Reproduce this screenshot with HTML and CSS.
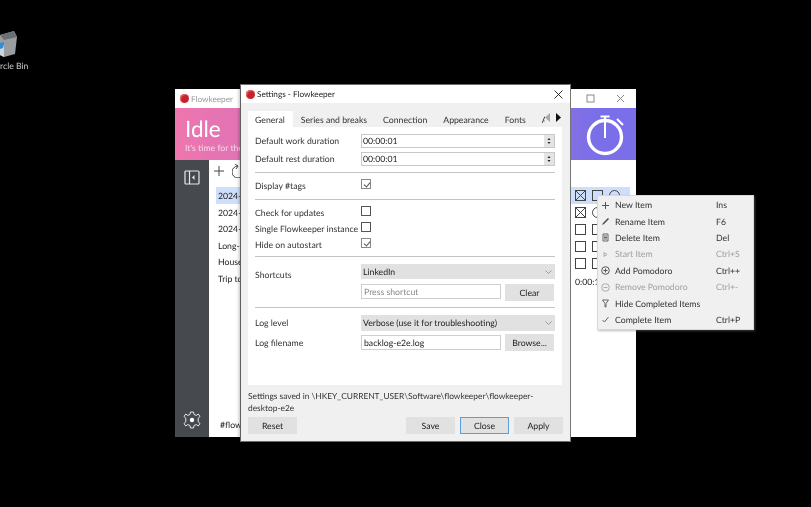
FILE: index.html
```html
<!DOCTYPE html>
<html lang="en">
<head>
  <meta charset="UTF-8">
  <title>Settings - Flowkeeper</title>
  <link rel="stylesheet" href="styles.css">
</head>
<body>
  <div class="desktop-icon">
    <svg class="bin" width="18" height="28" viewBox="0 0 18 28">
      <path d="M0 5 L14 1 L17 7 L15 24 L4 27 L0 25 Z" fill="#9a9da0"/>
      <path d="M0 5 L14 1 L17 7 L4 10 Z" fill="#6c7074"/>
      <path d="M0 17 L4 16 L4 27 L0 25 Z" fill="#d0d2d4"/>
      <path d="M0 13 L4 12 L3 18 L0 19 Z" fill="#2d8fd8"/>
    </svg>
    <span class="bin-label">rcle Bin</span>
  </div>

  <!-- main window, behind the dialog -->
  <div class="window main-window">
    <div class="main-title">
      <span class="tomato"></span>
      <span class="main-title-text">Flowkeeper</span>
      <span class="main-controls">
        <svg width="9" height="9" viewBox="0 0 9 9"><rect x="1" y="1" width="7" height="7" fill="none" stroke="#8a8a8a"/></svg>
        <svg width="9" height="9" viewBox="0 0 9 9"><path d="M1 1 L8 8 M8 1 L1 8" stroke="#8a8a8a"/></svg>
      </span>
    </div>
    <div class="hero">
      <div>
        <div class="hero-title">Idle</div>
        <div class="hero-sub">It's time for the</div>
      </div>
      <svg class="timer" width="40" height="44" viewBox="0 0 40 44">
        <circle cx="20" cy="25" r="16.5" fill="none" stroke="#fff" stroke-width="3.4"/>
        <path d="M20 5 V26 M15.5 4.5 H24.5 M32 7 L38 13" fill="none" stroke="#fff" stroke-width="2"/>
      </svg>
    </div>
    <div class="main-body">
      <div class="sidebar">
        <svg width="16" height="15" viewBox="0 0 16 15">
          <rect x="1" y="1" width="14" height="13" rx="1" fill="none" stroke="#e8e8e8" stroke-width="1.2"/>
          <path d="M5.5 1 V14" stroke="#e8e8e8" stroke-width="1.2"/>
          <path d="M10.5 5 L8 7.5 L10.5 10 Z" fill="#e8e8e8"/>
        </svg>
        <svg width="18" height="18" viewBox="0 0 18 18">
          <path d="M7.5 1 H10.5 L11 3.4 L13.2 4.4 L15.3 3.1 L17 5.5 L15.2 7.2 V10.8 L17 12.5 L15.3 14.9 L13.2 13.6 L11 14.6 L10.5 17 H7.5 L7 14.6 L4.8 13.6 L2.7 14.9 L1 12.5 L2.8 10.8 V7.2 L1 5.5 L2.7 3.1 L4.8 4.4 L7 3.4 Z" fill="none" stroke="#e8e8e8"/>
          <circle cx="9" cy="9" r="2.2" fill="#fff"/>
        </svg>
      </div>
      <div class="backlogs">
        <div class="back-tools">
          <svg width="12" height="12" viewBox="0 0 12 12"><path d="M6 1 V11 M1 6 H11" stroke="#444"/></svg>
          <svg width="12" height="14" viewBox="0 0 12 14"><path d="M6 2 A6 6 0 1 0 12 8 M3 0 L6 2 L4 5" fill="none" stroke="#444"/></svg>
        </div>
        <div class="back-row selected">2024-</div>
        <div class="back-row">2024-</div>
        <div class="back-row">2024-</div>
        <div class="back-row">Long-</div>
        <div class="back-row">House</div>
        <div class="back-row">Trip to</div>
        <div class="back-tag">#flow</div>
      </div>
      <div class="items">
        <div class="item-row selected"><span class="box cross"></span><span class="box dots"></span><span class="round"></span></div>
        <div class="item-row"><span class="box cross"></span><span class="round"></span></div>
        <div class="item-row"><span class="box"></span><span class="box"></span></div>
        <div class="item-row"><span class="box"></span><span class="box"></span></div>
        <div class="item-row"><span class="box"></span><span class="box"></span></div>
        <div class="item-total">0:00:1</div>
      </div>
    </div>
  </div>

  <!-- settings dialog -->
  <div class="window dialog">
    <div class="dialog-title">
      <span class="tomato"></span>
      <span class="dialog-title-text">Settings - Flowkeeper</span>
      <svg width="9" height="9" viewBox="0 0 9 9"><path d="M0.5 0.5 L8.5 8.5 M8.5 0.5 L0.5 8.5" stroke="#333"/></svg>
    </div>
    <div class="tabs">
      <span class="tab active">General</span>
      <span class="tab">Series and breaks</span>
      <span class="tab">Connection</span>
      <span class="tab">Appearance</span>
      <span class="tab">Fonts</span>
      <span class="tab tab-cut">A</span>
      <span class="tab-arrows">
        <svg width="6" height="9" viewBox="0 0 6 9"><path d="M5 0 V9 L0 4.5 Z" fill="#a8a8a8"/></svg>
        <svg width="6" height="9" viewBox="0 0 6 9"><path d="M1 0 V9 L6 4.5 Z" fill="#111"/></svg>
      </span>
    </div>
    <div class="pane">
      <div class="form-row row-spin1">
        <span class="label">Default work duration</span>
        <div class="spin"><span class="spin-value">00:00:01</span>
          <svg class="spin-btns" width="10" height="12" viewBox="0 0 10 12"><path d="M3.5 5 L5 3 L6.5 5 Z M3.5 7 L5 9 L6.5 7 Z" fill="#222"/></svg>
        </div>
      </div>
      <div class="form-row row-spin2">
        <span class="label">Default rest duration</span>
        <div class="spin"><span class="spin-value">00:00:01</span>
          <svg class="spin-btns" width="10" height="12" viewBox="0 0 10 12"><path d="M3.5 5 L5 3 L6.5 5 Z M3.5 7 L5 9 L6.5 7 Z" fill="#222"/></svg>
        </div>
      </div>
      <hr class="sep sep-a">
      <div class="form-row row-tags">
        <span class="label">Display #tags</span>
        <span class="check checked"></span>
      </div>
      <hr class="sep sep-b">
      <div class="form-row row-check">
        <span class="label">Check for updates</span>
        <span class="check"></span>
      </div>
      <div class="form-row row-check">
        <span class="label">Single Flowkeeper instance</span>
        <span class="check"></span>
      </div>
      <div class="form-row row-check">
        <span class="label">Hide on autostart</span>
        <span class="check checked"></span>
      </div>
      <hr class="sep sep-c">
      <div class="shortcut-block">
        <span class="label shortcut-label">Shortcuts</span>
        <div class="shortcut-fields">
          <div class="combo">LinkedIn<svg width="7" height="4" viewBox="0 0 7 4"><path d="M0.5 0.5 L3.5 3.5 L6.5 0.5" fill="none" stroke="#999"/></svg></div>
          <div class="field-line">
            <span class="text-input placeholder">Press shortcut</span>
            <span class="btn">Clear</span>
          </div>
        </div>
      </div>
      <hr class="sep sep-d">
      <div class="form-row row-log">
        <span class="label">Log level</span>
        <div class="combo">Verbose (use it for troubleshooting)<svg width="7" height="4" viewBox="0 0 7 4"><path d="M0.5 0.5 L3.5 3.5 L6.5 0.5" fill="none" stroke="#999"/></svg></div>
      </div>
      <div class="form-row row-file">
        <span class="label">Log filename</span>
        <div class="field-line">
          <span class="text-input">backlog-e2e.log</span>
          <span class="btn">Browse...</span>
        </div>
      </div>
    </div>
    <div class="status">Settings saved in \HKEY_CURRENT_USER\Software\flowkeeper\flowkeeper-<br>desktop-e2e</div>
    <div class="dialog-buttons">
      <span class="btn">Reset</span>
      <span class="spacer"></span>
      <span class="btn">Save</span>
      <span class="btn focus">Close</span>
      <span class="btn">Apply</span>
    </div>
  </div>

  <!-- context menu -->
  <div class="menu">
    <div class="menu-item">
      <svg width="9" height="9" viewBox="0 0 9 9"><path d="M4.5 1 V8 M1 4.5 H8" stroke="#555"/></svg>
      <span class="menu-name">New Item</span><span class="menu-key">Ins</span>
    </div>
    <div class="menu-item">
      <svg width="9" height="9" viewBox="0 0 9 9"><path d="M1 8 L2 6 L7 1 L8 2 L3 7 Z" fill="#444"/></svg>
      <span class="menu-name">Rename Item</span><span class="menu-key">F6</span>
    </div>
    <div class="menu-item">
      <svg width="9" height="9" viewBox="0 0 9 9"><path d="M2 1 H7 V8 H2 Z" fill="none" stroke="#666"/><path d="M3 3 H6 M3 4.5 H6 M3 6 H6" stroke="#666"/></svg>
      <span class="menu-name">Delete Item</span><span class="menu-key">Del</span>
    </div>
    <div class="menu-item disabled">
      <svg width="9" height="9" viewBox="0 0 9 9"><path d="M3 2.5 L6 4.5 L3 6.5 Z" fill="none" stroke="#aaa"/></svg>
      <span class="menu-name">Start Item</span><span class="menu-key">Ctrl+S</span>
    </div>
    <div class="menu-item">
      <svg width="9" height="9" viewBox="0 0 9 9"><circle cx="4.5" cy="4.5" r="3.8" fill="none" stroke="#555"/><path d="M4.5 2.5 V6.5 M2.5 4.5 H6.5" stroke="#555"/></svg>
      <span class="menu-name">Add Pomodoro</span><span class="menu-key">Ctrl++</span>
    </div>
    <div class="menu-item disabled">
      <svg width="9" height="9" viewBox="0 0 9 9"><circle cx="4.5" cy="4.5" r="3.8" fill="none" stroke="#aaa"/><path d="M2.5 4.5 H6.5" stroke="#aaa"/></svg>
      <span class="menu-name">Remove Pomodoro</span><span class="menu-key">Ctrl+-</span>
    </div>
    <div class="menu-item">
      <svg width="9" height="9" viewBox="0 0 9 9"><path d="M1.5 1 H7.5 L5 4.5 V8 H4 V4.5 Z" fill="none" stroke="#666"/></svg>
      <span class="menu-name">Hide Completed Items</span><span class="menu-key"></span>
    </div>
    <div class="menu-item">
      <svg width="9" height="9" viewBox="0 0 9 9"><path d="M1.5 5 L3.5 7 L7.5 2" fill="none" stroke="#666"/></svg>
      <span class="menu-name">Complete Item</span><span class="menu-key">Ctrl+P</span>
    </div>
  </div>
</body>
</html>
```

FILE: styles.css
```css
html, body {
  margin: 0;
  padding: 0;
  width: 811px;
  height: 507px;
  overflow: hidden;
  background-color: #000;
}
body {
  position: relative;
  font-family: Lato, "Open Sans", sans-serif;
  font-size: 8.7px;
  line-height: 12px;
  text-rendering: geometricPrecision;
  color: #222;
  filter: blur(0.35px);
}

/* desktop */
.desktop-icon {
  position: absolute;
  left: 0;
  top: 30px;
  width: 30px;
}
.bin {
  display: block;
}
.bin-label {
  display: block;
  margin-top: 2px;
  color: #c8c8c8;
  white-space: nowrap;
}

.window {
  position: absolute;
  box-sizing: border-box;
}

/* main window */
.main-window {
  left: 175px;
  top: 89px;
  width: 461px;
  height: 348px;
  display: flex;
  flex-direction: column;
  background-color: #fff;
}
.main-title {
  height: 19px;
  display: flex;
  align-items: center;
  padding-left: 5px;
  gap: 2px;
  color: #999;
  flex: none;
}
.main-title-text, .dialog-title-text {
  font-size: 8.2px;
}
.main-controls {
  margin-left: auto;
  display: flex;
  gap: 21px;
  padding-right: 11px;
}
.tomato {
  width: 9px;
  height: 9px;
  border-radius: 50%;
  flex: none;
  background-color: #c4232b;
  box-shadow: inset 1px 1px 1px #e8686a;
}
.hero {
  height: 52px;
  flex: none;
  display: flex;
  justify-content: space-between;
  align-items: flex-start;
  box-sizing: border-box;
  padding: 7px 11px 0 10px;
  background: linear-gradient(90deg, #ee76ae, #dc72b8 20%, #7a6fe8 92%);
  color: #fff;
}
.hero-title {
  font-size: 22.5px;
  line-height: 27px;
}
.hero-sub {
  color: #f8d8e8;
}
.timer {
  margin-top: -3px;
}
.main-body {
  flex: 1;
  display: flex;
  min-height: 0;
}
.sidebar {
  width: 34px;
  flex: none;
  background-color: #46494d;
  display: flex;
  flex-direction: column;
  align-items: center;
  justify-content: space-between;
  padding: 10px 0 8px;
  box-sizing: border-box;
}
.backlogs {
  width: 110px;
  flex: none;
  padding: 4px 0 0 7px;
  box-sizing: border-box;
  display: flex;
  flex-direction: column;
}
.back-tools {
  display: flex;
  align-items: center;
  gap: 7px;
  height: 14px;
  margin: 0 0 9px -3px;
}
.back-row {
  height: 16.5px;
  line-height: 17px;
  padding-left: 2px;
}
.back-row.selected {
  background-color: #cfdffb;
}
.back-tag {
  margin-top: auto;
  padding: 0 0 6px 4px;
}
.items {
  margin-left: auto;
  width: 65px;
  padding: 27px 6px 0 0;
  box-sizing: border-box;
}
.item-row {
  height: 17px;
  display: flex;
  align-items: center;
  gap: 6px;
  padding-left: 4px;
}
.item-row.selected {
  background-color: #cfdffb;
}
.box {
  width: 11px;
  height: 11px;
  border: 1px solid #444;
  box-sizing: border-box;
  flex: none;
}
.box.cross {
  background: linear-gradient(45deg, transparent 46%, #444 46%, #444 54%, transparent 54%), linear-gradient(-45deg, transparent 46%, #444 46%, #444 54%, transparent 54%);
}
.round {
  width: 11px;
  height: 11px;
  border: 1px solid #444;
  border-radius: 50%;
  box-sizing: border-box;
  flex: none;
}
.item-total {
  padding: 4px 0 0 4px;
}

/* dialog */
.dialog {
  left: 241px;
  top: 85px;
  width: 329px;
  height: 356px;
  background-color: #f0f0f0;
  box-shadow: -2px 0 3px rgba(0, 0, 0, 0.25), 0 0 0 1px #777;
  display: flex;
  flex-direction: column;
}
.dialog-title {
  height: 18px;
  flex: none;
  background-color: #fff;
  display: flex;
  align-items: center;
  gap: 2px;
  padding: 0 7px 0 5px;
}
.dialog-title-text {
  flex: 1;
}
.tabs {
  height: 24px;
  flex: none;
  margin: 0 8px 0 7px;
  display: flex;
  align-items: flex-end;
  overflow: hidden;
}
.tab {
  height: 16px;
  line-height: 17px;
  padding: 0 8px;
  background-color: #f0f0f0;
  white-space: nowrap;
  color: #333;
  flex: none;
}
.tab.active {
  padding-left: 7px;
  background-color: #fff;
}
.tab-cut {
  width: 3px;
  padding: 0 0 0 8px;
  overflow: hidden;
}
.tab-arrows {
  display: flex;
  gap: 4px;
  align-self: center;
  margin-left: auto;
  padding: 4px 1px 0 0;
  flex: none;
}
.pane {
  height: 258px;
  flex: none;
  margin: 0 8px 0 7px;
  padding: 7px 7px 0;
  background-color: #fff;
  box-sizing: border-box;
}
.form-row {
  display: grid;
  grid-template-columns: 106px 1fr;
  align-items: center;
}
.label {
  color: #333;
  white-space: nowrap;
}
.row-spin1 {
  height: 14px;
}
.row-spin2 {
  height: 14px;
  margin-top: 4px;
}
.spin {
  height: 14px;
  box-sizing: border-box;
  border: 1px solid #c8c8c8;
  display: flex;
  align-items: center;
  padding-left: 1px;
}
.spin-value {
  flex: 1;
}
.spin-btns {
  flex: none;
  background-color: #e4e4e4;
}
.sep {
  margin: 0;
  border: none;
  height: 1px;
  background-color: #c4c4c4;
}
.sep-a {
  margin-top: 6px;
}
.row-tags {
  height: 14px;
  margin-top: 6px;
}
.row-tags .check {
  top: -2px;
}
.sep-b {
  margin-top: 6px;
}
.check {
  width: 10px;
  height: 10px;
  box-sizing: border-box;
  border: 1px solid #555;
  display: block;
  position: relative;
}
.check.checked {
  border-color: #888;
}
.check.checked::after {
  content: "";
  position: absolute;
  left: 2.5px;
  top: 0.5px;
  width: 3px;
  height: 5px;
  border-right: 1px solid #555;
  border-bottom: 1px solid #555;
  transform: rotate(40deg);
}
.row-check {
  height: 16px;
}
.sep-b + .row-check {
  margin-top: 5px;
}
.row-check .check {
  top: -2px;
}
.sep-c {
  margin-top: 3px;
}
.shortcut-block {
  display: grid;
  grid-template-columns: 106px 1fr;
  margin-top: 7px;
}
.shortcut-label {
  margin-top: 5px;
}
.shortcut-fields {
  display: flex;
  flex-direction: column;
  gap: 5px;
}
.shortcut-fields .text-input {
  align-self: flex-start;
}
.combo {
  height: 15px;
  background-color: #e1e1e1;
  display: flex;
  align-items: center;
  justify-content: space-between;
  padding: 0 3px 0 2px;
  box-sizing: border-box;
  color: #222;
}
.field-line {
  display: flex;
  align-items: center;
  gap: 4px;
}
.text-input {
  width: 140px;
  height: 15px;
  line-height: 13px;
  box-sizing: border-box;
  border: 1px solid #cfcfcf;
  padding-left: 2px;
  background-color: #fff;
  flex: none;
}
.placeholder {
  color: #888;
}
.btn {
  width: 49px;
  height: 17px;
  line-height: 17px;
  text-align: center;
  background-color: #e1e1e1;
  box-sizing: border-box;
  flex: none;
  color: #222;
}
.sep-d {
  margin-top: 6px;
}
.row-log {
  margin-top: 7px;
}
.row-log .combo {
  height: 16px;
}
.row-file {
  margin-top: 3px;
}
.status {
  flex: none;
  margin: 5px 7px 0;
  font-size: 8.4px;
  color: #333;
  height: 26px;
}
.dialog-buttons {
  display: flex;
  gap: 5px;
  margin: 1px 7px 0;
}
.spacer {
  flex: 1;
}
.btn.focus {
  border: 1px solid #5a9fd8;
  line-height: 15px;
}

/* context menu */
.menu {
  position: absolute;
  left: 597px;
  top: 195px;
  width: 157px;
  height: 135px;
  box-sizing: border-box;
  padding: 1px 0;
  background-color: #f0f0f0;
  box-shadow: 1px 1px 2px rgba(120, 120, 120, 0.5);
  border: 1px solid #d8d8d8;
}
.menu-item {
  height: 16.4px;
  display: flex;
  align-items: center;
  padding-left: 3px;
  color: #333;
}
.menu-item svg {
  flex: none;
  width: 9px;
  margin-right: 5px;
}
.menu-name {
  width: 101px;
  flex: none;
  white-space: nowrap;
}
.menu-item.disabled {
  color: #a0a0a0;
}
```
